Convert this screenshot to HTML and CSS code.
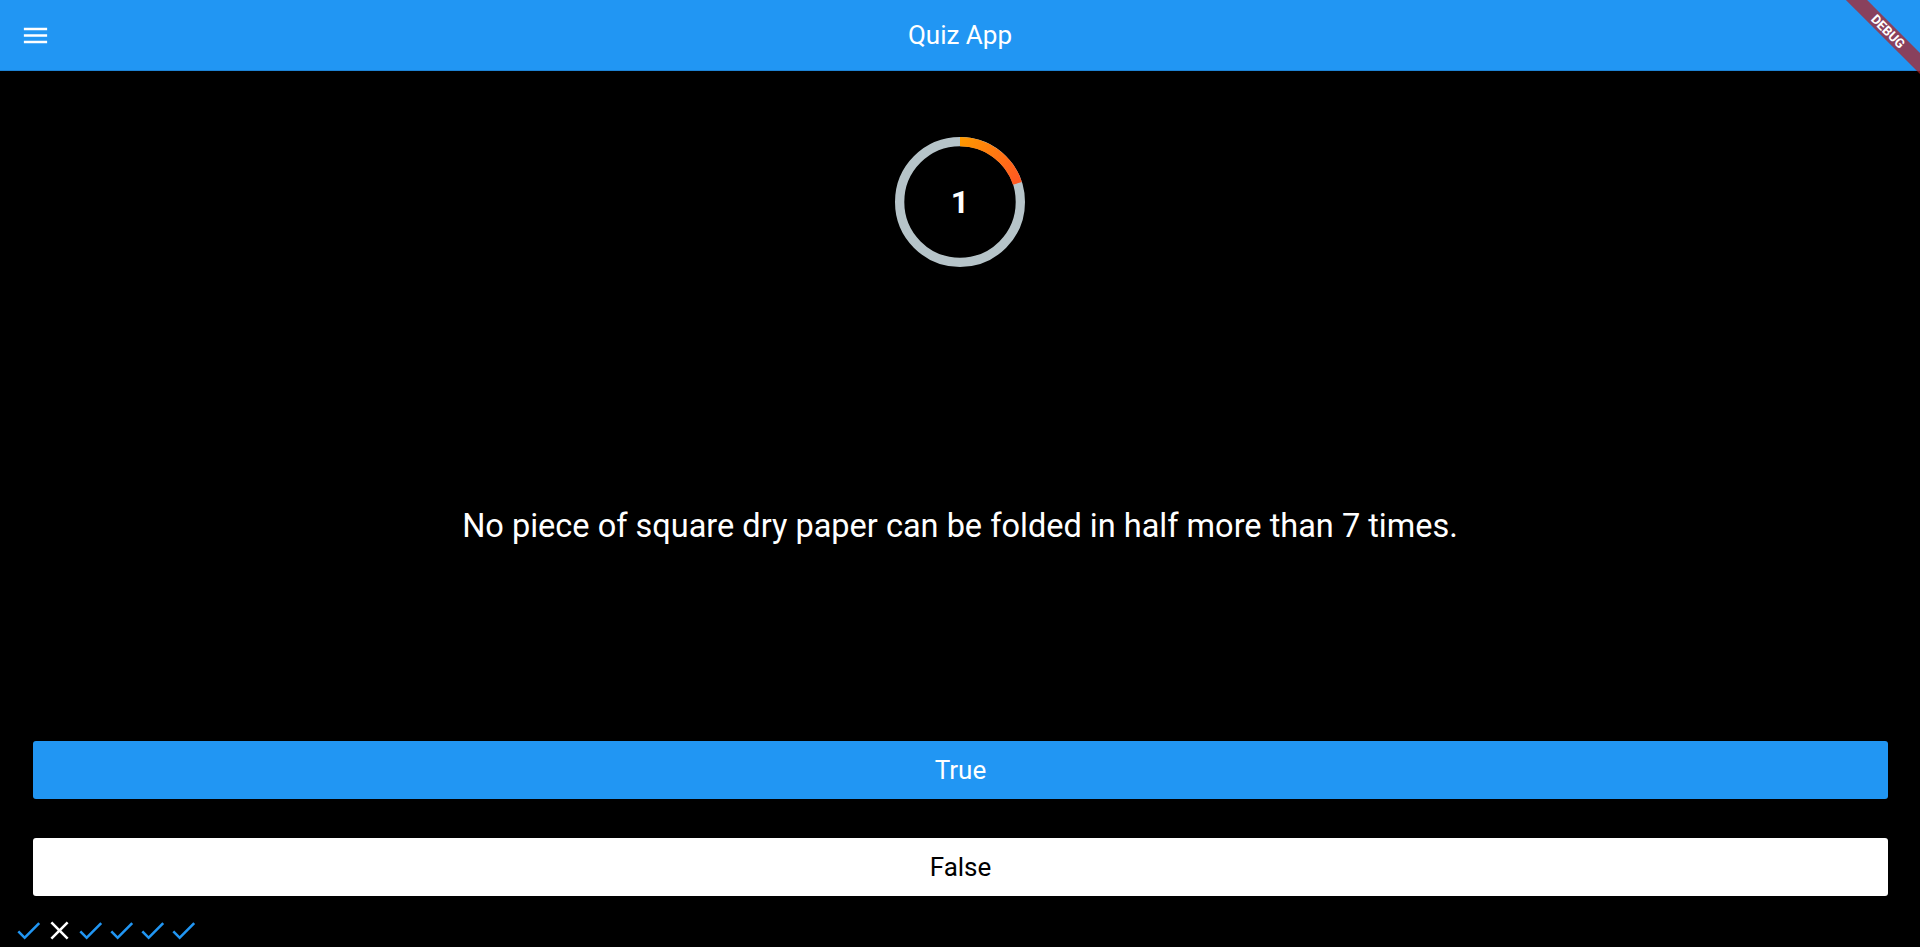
FILE: index.html
```html
<!DOCTYPE html>
<html lang="en">
<head>
<meta charset="utf-8">
<title>Quiz App</title>
<link rel="stylesheet" href="styles.css">
</head>
<body>
<div class="app">
  <header class="appbar">
    <div class="menu">
      <svg class="menu-icon" viewBox="0 0 24 24" width="31" height="31"><path fill="#ffffff" d="M3 18h18v-2H3v2zm0-5h18v-2H3v2zm0-7v2h18V6H3z"/></svg>
    </div>
    <div class="title">Quiz App</div>
    <div class="spacer"></div>
  </header>
  <main class="content">
    <div class="timer-wrap">
      <div class="timer">
        <svg class="ring" viewBox="0 0 130 130" width="130" height="130">
          <defs>
            <linearGradient id="arcGrad" gradientUnits="userSpaceOnUse" x1="65" y1="4.65" x2="122.4" y2="46.35">
              <stop offset="0" stop-color="#ff9800"/>
              <stop offset="1" stop-color="#ff5722"/>
            </linearGradient>
          </defs>
          <circle cx="65" cy="65" r="60.35" fill="none" stroke="#b6c4c9" stroke-width="9.3"/>
          <path d="M65 4.65 A60.35 60.35 0 0 1 122.4 46.35" fill="none" stroke="url(#arcGrad)" stroke-width="9.3"/>
        </svg>
        <div class="count">1</div>
      </div>
    </div>
    <div class="question">
      <p class="question-text">No piece of square dry paper can be folded in half more than 7 times.</p>
    </div>
    <div class="answers">
      <button class="btn btn-true">True</button>
      <button class="btn btn-false">False</button>
    </div>
    <div class="scores">
      <svg class="score" viewBox="0 0 24 24" width="31" height="31"><path fill="#2196f3" d="M9 16.17L4.83 12l-1.42 1.41L9 19 21 7l-1.41-1.41z"/></svg>
      <svg class="score" viewBox="0 0 24 24" width="31" height="31"><path fill="#ffffff" d="M19 6.41L17.59 5 12 10.59 6.41 5 5 6.41 10.59 12 5 17.59 6.41 19 12 13.41 17.59 19 19 17.59 13.41 12z"/></svg>
      <svg class="score" viewBox="0 0 24 24" width="31" height="31"><path fill="#2196f3" d="M9 16.17L4.83 12l-1.42 1.41L9 19 21 7l-1.41-1.41z"/></svg>
      <svg class="score" viewBox="0 0 24 24" width="31" height="31"><path fill="#2196f3" d="M9 16.17L4.83 12l-1.42 1.41L9 19 21 7l-1.41-1.41z"/></svg>
      <svg class="score" viewBox="0 0 24 24" width="31" height="31"><path fill="#2196f3" d="M9 16.17L4.83 12l-1.42 1.41L9 19 21 7l-1.41-1.41z"/></svg>
      <svg class="score" viewBox="0 0 24 24" width="31" height="31"><path fill="#2196f3" d="M9 16.17L4.83 12l-1.42 1.41L9 19 21 7l-1.41-1.41z"/></svg>
    </div>
  </main>
  <div class="debug-banner">DEBUG</div>
</div>
</body>
</html>
```

FILE: styles.css
```css
* {
  box-sizing: border-box;
}

html, body {
  margin: 0;
  padding: 0;
  width: 1920px;
  height: 947px;
  overflow: hidden;
  background: #000000;
  font-family: Roboto, "Noto Sans", "Liberation Sans", sans-serif;
}

.app {
  position: relative;
  width: 1920px;
  height: 947px;
  overflow: hidden;
  display: flex;
  flex-direction: column;
}

.appbar {
  height: 71px;
  flex: none;
  background: #2196f3;
  box-shadow: inset 0 -1px 0 rgba(0, 0, 0, 0.12);
  display: grid;
  grid-template-columns: 1fr auto 1fr;
  align-items: center;
}

.menu {
  padding-left: 20px;
  display: flex;
  align-items: center;
}

.menu-icon {
  display: block;
}

.title {
  color: #ffffff;
  font-size: 26px;
  font-weight: 400;
  line-height: 31px;
}

.content {
  flex: 1;
  display: flex;
  flex-direction: column;
}

.timer-wrap {
  margin-top: 66px;
  display: flex;
  justify-content: center;
}

.timer {
  display: grid;
  width: 130px;
  height: 130px;
}

.ring,
.count {
  grid-area: 1 / 1;
}

.ring {
  display: block;
}

.count {
  display: flex;
  align-items: center;
  justify-content: center;
  color: #ffffff;
  font-size: 32px;
  font-weight: 700;
  padding-bottom: 1px;
}

.question {
  height: 474px;
  padding-top: 240px;
}

.question-text {
  margin: 0;
  text-align: center;
  color: #ffffff;
  font-size: 32.5px;
  line-height: 38px;
}

.answers {
  display: flex;
  flex-direction: column;
  gap: 39px;
  margin: 0 32px 0 33px;
}

.btn {
  height: 58px;
  border: none;
  border-radius: 3px;
  font-family: Roboto, "Noto Sans", "Liberation Sans", sans-serif;
  font-size: 26px;
  font-weight: 400;
  padding: 0;
  display: flex;
  align-items: center;
  justify-content: center;
}

.btn-true {
  background: #2196f3;
  color: #ffffff;
}

.btn-false {
  background: #ffffff;
  color: #000000;
}

.scores {
  margin-top: 19px;
  padding-left: 13px;
  display: flex;
  height: 31px;
}

.score {
  display: block;
  flex: none;
}

.debug-banner {
  position: absolute;
  left: 1818px;
  top: 23.5px;
  width: 140px;
  height: 15px;
  background: rgba(183, 28, 28, 0.7);
  color: #ffffff;
  font-size: 13px;
  font-weight: 700;
  line-height: 15px;
  text-align: center;
  transform: rotate(45deg);
  transform-origin: 50% 50%;
}
```
